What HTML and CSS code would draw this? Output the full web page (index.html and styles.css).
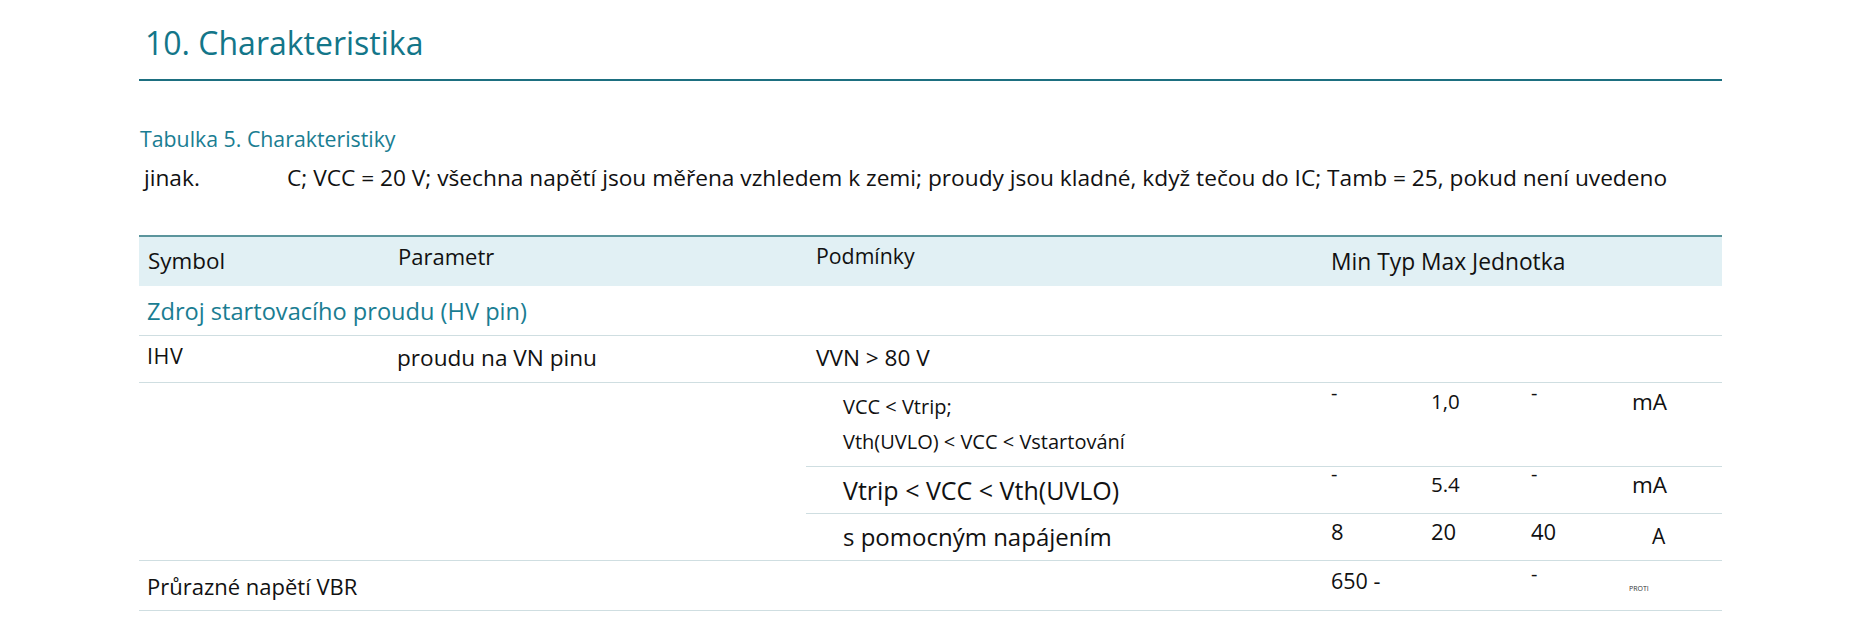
FILE: index.html
```html
<!DOCTYPE html>
<html lang="cs">
<head>
<meta charset="utf-8">
<title>10. Charakteristika</title>
<link rel="stylesheet" href="styles.css">
</head>
<body>
<div class="page">
  <h1 class="title">10. Charakteristika</h1>
  <div class="caption">Tabulka 5. Charakteristiky</div>
  <div class="intro"><span class="intro-lead">jinak.</span><span>C; VCC = 20 V; všechna napětí jsou měřena vzhledem k zemi; proudy jsou kladné, když tečou do IC; Tamb = 25, pokud není uvedeno</span></div>
  <table class="spec">
    <colgroup>
      <col class="c-sym"><col class="c-par"><col class="c-cond"><col class="c-val"><col class="c-val"><col class="c-val"><col class="c-unit">
    </colgroup>
    <thead>
      <tr class="head">
        <th class="h-sym">Symbol</th>
        <th class="h-par">Parametr</th>
        <th class="h-cond">Podmínky</th>
        <th class="h-vals" colspan="4">Min Typ Max Jednotka</th>
      </tr>
    </thead>
    <tbody>
      <tr class="group">
        <td colspan="7">Zdroj startovacího proudu (HV pin)</td>
      </tr>
      <tr class="r-ihv">
        <td class="sym-small">IHV</td>
        <td class="par">proudu na VN pinu</td>
        <td class="cond">VVN &gt; 80 V</td>
        <td></td><td></td><td></td><td></td>
      </tr>
      <tr class="r-sub1">
        <td rowspan="3" class="blank"></td>
        <td rowspan="3" class="blank"></td>
        <td class="cond-small">VCC &lt; Vtrip;<br>Vth(UVLO) &lt; VCC &lt; Vstartování</td>
        <td class="dash">-</td>
        <td class="val">1,0</td>
        <td class="dash">-</td>
        <td class="unit">mA</td>
      </tr>
      <tr class="r-sub2">
        <td class="cond-big">Vtrip &lt; VCC &lt; Vth(UVLO)</td>
        <td class="dash">-</td>
        <td class="val">5.4</td>
        <td class="dash">-</td>
        <td class="unit">mA</td>
      </tr>
      <tr class="r-sub3">
        <td class="cond-big cond-aux">s pomocným napájením</td>
        <td class="val">8</td>
        <td class="val">20</td>
        <td class="val">40</td>
        <td class="unit unit-a">A</td>
      </tr>
      <tr class="r-vbr">
        <td class="par-wide" colspan="3">Průrazné napětí VBR</td>
        <td class="val">650 -</td>
        <td></td>
        <td class="dash">-</td>
        <td class="unit-tiny">PROTI</td>
      </tr>
    </tbody>
  </table>
</div>
</body>
</html>
```

FILE: styles.css
```css
html, body {
  margin: 0;
  padding: 0;
  background: #ffffff;
}

body {
  font-family: "Open Sans", "Noto Sans", sans-serif;
  color: #111111;
}

.page {
  width: 1583px;
  margin-left: 139px;
  padding-top: 26px;
}

.title {
  margin: 0;
  padding: 0 0 20px 6px;
  font-size: 32px;
  line-height: 33px;
  font-weight: 400;
  color: #137689;
  border-bottom: 2px solid #1d6f80;
}

.caption {
  margin-top: 45px;
  padding-left: 1px;
  font-size: 21.3px;
  line-height: 25px;
  color: #1a7d92;
}

.intro {
  display: flex;
  margin-top: 12px;
  padding-left: 5px;
  font-size: 22.7px;
  line-height: 30px;
  color: #111111;
}

.intro-lead {
  width: 143px;
  flex: none;
}

.spec {
  margin-top: 42px;
  width: 1583px;
  border-collapse: collapse;
  table-layout: fixed;
}

.c-sym { width: 251px; }
.c-par { width: 416px; }
.c-cond { width: 516px; }
.c-val { width: 100px; }
.c-unit { width: 100px; }

.spec th,
.spec td {
  padding: 0;
  text-align: left;
  vertical-align: top;
  font-weight: 400;
  line-height: 1.2;
}

.head {
  background: #e1f0f4;
  border-top: 2px solid #5b959c;
}

.head th {
  height: 50px;
  box-sizing: border-box;
  font-size: 22px;
  color: #111111;
}

.h-sym { padding: 11px 0 0 9px !important; font-size: 22.4px !important; }
.h-par { padding: 6px 0 0 8px !important; }
.h-cond { padding: 6px 0 0 10px !important; font-size: 21.3px !important; }
.h-vals { padding: 11px 0 0 9px !important; font-size: 22.8px !important; }

.spec tbody td {
  border-bottom: 1px solid #cfdee1;
}

.group td {
  height: 49px;
  box-sizing: border-box;
  padding: 11px 0 0 8px;
  font-size: 23.6px;
  color: #1a7d92;
}

.r-ihv td { height: 47px; box-sizing: border-box; }
.r-sub1 td { height: 84px; box-sizing: border-box; }
.r-sub2 td { height: 47px; box-sizing: border-box; }
.r-sub3 td { height: 47px; box-sizing: border-box; }
.r-vbr td { height: 50px; box-sizing: border-box; }

.sym-small {
  padding: 7px 0 0 8px !important;
  font-size: 21.5px;
  letter-spacing: 0.6px;
}

.par {
  padding: 8px 0 0 7px !important;
  font-size: 22.6px;
}

.cond {
  padding: 8px 0 0 10px !important;
  font-size: 22.6px;
}

.cond-small {
  padding: 6px 0 0 37px !important;
  font-size: 20px;
  line-height: 35px !important;
}

.cond-big {
  padding: 8px 0 0 37px !important;
  font-size: 25px;
}

.cond-aux {
  font-size: 24px;
  padding-top: 9px !important;
}

.val {
  padding: 6px 0 0 9px !important;
  font-size: 20.5px;
}

.r-sub2 .val {
  padding-top: 5px !important;
}

.r-sub3 .val {
  padding-top: 4px !important;
  font-size: 22px;
}

.dash {
  padding: 5px 0 0 9px !important;
  font-size: 20px;
  line-height: 10px !important;
}

.r-sub2 .dash {
  padding-top: 2px !important;
}

.unit {
  padding: 5px 0 0 10px !important;
  font-size: 22.5px;
}

.r-sub2 .unit {
  padding-top: 4px !important;
}

.unit-a {
  padding: 10px 0 0 30px !important;
  font-size: 21px;
}

.r-vbr .val {
  padding-top: 7px !important;
  font-size: 21.5px;
}

.r-vbr .dash {
  padding-top: 8px !important;
}

.par-wide {
  padding: 12px 0 0 8px !important;
  font-size: 22px;
}

.unit-tiny {
  padding: 24px 0 0 7px !important;
  font-size: 7px;
  color: #333333;
}
```
